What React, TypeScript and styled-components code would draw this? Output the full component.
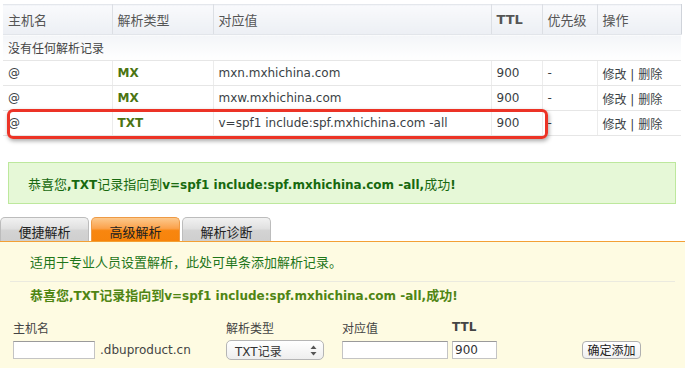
import styled, { createGlobalStyle } from 'styled-components';

const GlobalStyle = createGlobalStyle`
  body {
    margin: 0;
    background: #ffffff;
    font-family: "DejaVu Sans", "Noto Sans CJK SC", sans-serif;
    font-size: 12px;
    color: #333333;
  }
`;

const Page = styled.div`
  width: 685px;
  height: 368px;
  overflow: hidden;
  display: flex;
  flex-direction: column;
`;

const TableWrap = styled.div`
  position: relative;
  padding: 4px 0 0 3px;
`;

const Table = styled.table`
  width: 678px;
  border-collapse: collapse;
  table-layout: fixed;
`;

const HeadCell = styled.th<{ $w: number; $bold?: boolean }>`
  width: ${p => p.$w}px;
  height: 30px;
  padding: 0 0 0 5px;
  text-align: left;
  font-weight: ${p => (p.$bold ? 700 : 400)};
  font-size: 13px;
  color: #555555;
  background: linear-gradient(#f9fafc, #eceff4);
  border-top: 1px solid #e4e7ec;
  border-right: 1px solid #dcdfe4;
  border-bottom: 1px solid #e2e5ea;
  box-sizing: border-box;

  &:last-child {
    border-right: 1px solid #cfd3da;
  }
`;

const EmptyCell = styled.td`
  height: 25px;
  padding: 0 0 0 5px;
  font-size: 12px;
  color: #444444;
  background: linear-gradient(#f3f5f8, #ffffff);
  border-bottom: 1px solid #e6e6e6;
`;

const Cell = styled.td<{ $green?: boolean }>`
  height: 24px;
  padding: 0 0 0 5px;
  font-size: 12px;
  white-space: nowrap;
  color: ${p => (p.$green ? '#4b7412' : '#3a3f45')};
  font-weight: ${p => (p.$green ? 700 : 400)};
  border-bottom: 1px solid #e6e6e6;
  border-right: 1px solid #ececec;

  &:last-child {
    border-right: none;
  }
`;

const Highlight = styled.div`
  position: absolute;
  left: 7px;
  top: 109px;
  width: 541px;
  height: 30px;
  box-sizing: border-box;
  border: 3px solid #ec3326;
  border-radius: 6px;
  box-shadow: 1px 2px 4px rgba(0, 0, 0, 0.35);
  pointer-events: none;
`;

const SuccessBox = styled.div`
  margin: 26px 0 0 8px;
  width: 668px;
  height: 42px;
  box-sizing: border-box;
  background: #e6f8d7;
  border: 1px solid #bde89d;
  display: flex;
  align-items: center;
  padding-left: 19px;
  font-size: 13px;
  color: #17690f;
`;

const B = styled.b`
  font-weight: 700;
  font-size: 12px;
`;

const TabBar = styled.div`
  margin-top: 13px;
  display: flex;
  gap: 2px;
  border-bottom: 1px solid #f3a035;
`;

const Tab = styled.div<{ $active?: boolean }>`
  width: 89px;
  height: 24px;
  box-sizing: border-box;
  display: flex;
  align-items: center;
  justify-content: center;
  padding-top: 3px;
  font-size: 13px;
  color: #222222;
  border: 1px solid ${p => (p.$active ? '#ee9a45' : '#bcbcbc')};
  border-bottom: none;
  border-radius: 5px 5px 0 0;
  background: ${p =>
    p.$active
      ? 'linear-gradient(#fcc98d 0%, #fba24c 45%, #f8860f 55%, #f7840c 100%)'
      : 'linear-gradient(#f1f1f1 0%, #e1e1e1 45%, #d3d3d3 55%, #cfcfcf 100%)'};
`;

const Panel = styled.div`
  flex: 1;
  background: #fefbe2;
  display: flex;
  flex-direction: column;
`;

const Intro = styled.div`
  margin-top: 11px;
  padding-left: 30px;
  height: 20px;
  line-height: 20px;
  font-size: 13px;
  color: #1f761a;
`;

const Divider = styled.div`
  margin: 8px 10px 0 10px;
  height: 1px;
  background: #ebeadf;
`;

const Notice = styled.div`
  margin-top: 4px;
  padding-left: 30px;
  height: 20px;
  line-height: 20px;
  font-size: 13px;
  font-weight: 700;
  color: #4f8513;
`;

const Form = styled.div`
  margin-top: 12px;
  padding-left: 13px;
  display: grid;
  grid-template-columns: 213px 116px 110px 130px 70px;
  grid-template-rows: 18px 18px;
  row-gap: 5px;
  align-items: center;
`;

const Label = styled.div<{ $bold?: boolean }>`
  font-size: 12px;
  color: #444444;
  font-weight: ${p => (p.$bold ? 700 : 400)};
`;

const Field = styled.div`
  display: flex;
  align-items: center;
  gap: 5px;
  font-size: 12px;
  color: #444444;
`;

const TextInput = styled.input<{ $w: number }>`
  width: ${p => p.$w}px;
  height: 18px;
  box-sizing: border-box;
  margin: 0;
  padding: 0 2px;
  border: 1px solid #c4c4c4;
  border-top-color: #9a9a9a;
  background: #ffffff;
  font-family: "DejaVu Sans", sans-serif;
  font-size: 12px;
  color: #333333;
  outline: none;
`;

const SelectBox = styled.div`
  width: 98px;
  height: 20px;
  box-sizing: border-box;
  border: 1px solid #b5b5b5;
  border-radius: 5px;
  background: linear-gradient(#ffffff, #eeeeee);
  display: flex;
  align-items: center;
  justify-content: space-between;
  padding: 0 6px 0 8px;
  font-size: 12px;
  color: #333333;
`;

const Button = styled.button`
  width: 59px;
  height: 18px;
  box-sizing: border-box;
  margin: 0;
  padding: 0;
  border: 1px solid #b0b0b0;
  border-radius: 4px;
  background: linear-gradient(#ffffff, #f0f0f0);
  font-family: "Noto Sans CJK SC", sans-serif;
  font-size: 12px;
  line-height: 16px;
  color: #222222;
`;

const columns = [
  { title: '主机名', w: 109 },
  { title: '解析类型', w: 101 },
  { title: '对应值', w: 278 },
  { title: 'TTL', w: 51, bold: true },
  { title: '优先级', w: 55 },
  { title: '操作', w: 84 },
];

const records = [
  { host: '@', type: 'MX', value: 'mxn.mxhichina.com' },
  { host: '@', type: 'MX', value: 'mxw.mxhichina.com' },
  { host: '@', type: 'TXT', value: 'v=spf1 include:spf.mxhichina.com -all' },
];

const Arrows = () => (
  <svg width="7" height="11" viewBox="0 0 7 11">
    <path d="M3.5 0.5 L6.5 4 L0.5 4 Z" fill="#555" />
    <path d="M3.5 10.5 L6.5 7 L0.5 7 Z" fill="#555" />
  </svg>
);

export default function App() {
  return (
    <Page>
      <GlobalStyle />
      <TableWrap>
        <Table>
          <thead>
            <tr>
              {columns.map(c => (
                <HeadCell key={c.title} $w={c.w} $bold={c.bold}>
                  {c.title}
                </HeadCell>
              ))}
            </tr>
          </thead>
          <tbody>
            <tr>
              <EmptyCell colSpan={6}>没有任何解析记录</EmptyCell>
            </tr>
            {records.map(r => (
              <tr key={r.value}>
                <Cell>{r.host}</Cell>
                <Cell $green>{r.type}</Cell>
                <Cell>{r.value}</Cell>
                <Cell>900</Cell>
                <Cell>-</Cell>
                <Cell>修改 | 删除</Cell>
              </tr>
            ))}
          </tbody>
        </Table>
        <Highlight />
      </TableWrap>

      <SuccessBox>
        <span>
          恭喜您<B>,TXT</B>记录指向到<B>v=spf1 include:spf.mxhichina.com -all,</B>成功<B>!</B>
        </span>
      </SuccessBox>

      <TabBar>
        <Tab>便捷解析</Tab>
        <Tab $active>高级解析</Tab>
        <Tab>解析诊断</Tab>
      </TabBar>

      <Panel>
        <Intro>适用于专业人员设置解析，此处可单条添加解析记录。</Intro>
        <Divider />
        <Notice>
          恭喜您<B>,TXT</B>记录指向到<B>v=spf1 include:spf.mxhichina.com -all,</B>成功<B>!</B>
        </Notice>
        <Form>
          <Label>主机名</Label>
          <Label>解析类型</Label>
          <Label>对应值</Label>
          <Label $bold>TTL</Label>
          <div />
          <Field>
            <TextInput $w={82} defaultValue="" />
            <span>.dbuproduct.cn</span>
          </Field>
          <Field>
            <SelectBox>
              <span>TXT记录</span>
              <Arrows />
            </SelectBox>
          </Field>
          <Field>
            <TextInput $w={106} defaultValue="" />
          </Field>
          <Field>
            <TextInput $w={45} defaultValue="900" />
          </Field>
          <Field>
            <Button>确定添加</Button>
          </Field>
        </Form>
      </Panel>
    </Page>
  );
}
